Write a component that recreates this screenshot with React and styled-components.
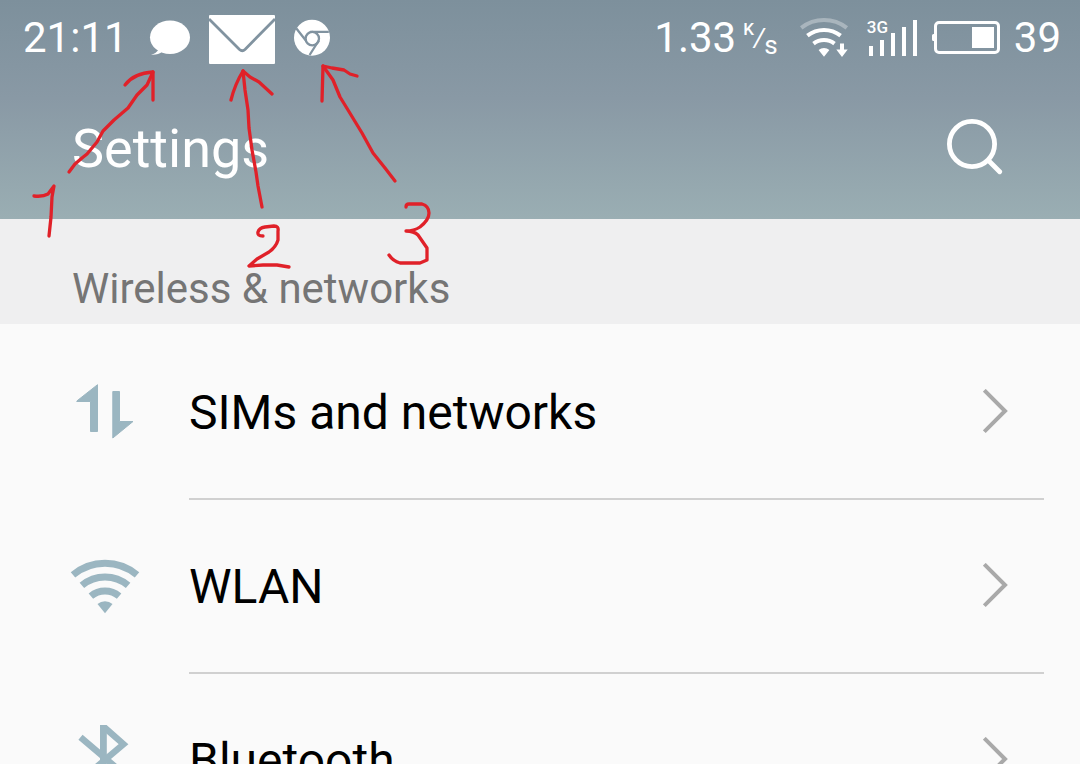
import React from "react";
import styled, { createGlobalStyle } from "styled-components";

const GlobalStyle = createGlobalStyle`
  * {
    box-sizing: border-box;
  }

  body {
    margin: 0;
    font-family: Roboto, "Noto Sans", sans-serif;
    background: #fafafa;
  }
`;

// ---------------- Layout ----------------
const Screen = styled.div`
  position: relative;
  height: 100vh;
  overflow: hidden;
  background: #fafafa;
  color: #000;
`;

const Header = styled.header`
  background: linear-gradient(#7d909c, #8999a5 45%, #9aaeb3);
  color: #fff;
`;

const StatusBar = styled.div`
  display: flex;
  justify-content: space-between;
  align-items: center;
  height: 74px;
  padding: 0 19px 0 23px;
`;

const StatusGroup = styled.div`
  display: flex;
  align-items: center;
  gap: ${({ $gap }) => $gap}px;

  svg {
    display: block;
    flex-shrink: 0;
  }
`;

const StatusText = styled.span`
  padding-top: 2px;
  font-size: 42px;
  line-height: 48px;
`;

const Speed = styled.div`
  display: flex;
  align-items: center;
  gap: 7px;
  padding-right: 8px;
`;

const Unit = styled.span`
  display: flex;
  height: 36px;
  font-size: 26px;
  line-height: 36px;
`;

const UnitTop = styled.span`
  font-size: 17px;
  font-weight: 500;
  line-height: 20px;
`;

const UnitSlash = styled.span`
  font-style: italic;
`;

const UnitBottom = styled.span`
  align-self: flex-end;
  line-height: 20px;
`;

const Signal = styled.div`
  position: relative;
`;

const NetworkType = styled.span`
  position: absolute;
  top: 0;
  left: 0;
  font-size: 17px;
  font-weight: 500;
  line-height: 18px;
`;

const TitleBar = styled.div`
  display: flex;
  justify-content: space-between;
  align-items: center;
  height: 145px;
  padding: 0 77px 0 72px;
`;

const Title = styled.h1`
  margin: 0;
  padding-top: 4px;
  font-size: 54px;
  font-weight: 400;
  line-height: 64px;
`;

const SearchButton = styled.button`
  padding: 0;
  border: none;
  background: none;
  color: inherit;
  cursor: pointer;

  svg {
    display: block;
  }
`;

const SectionTitle = styled.h2`
  margin: 0;
  padding: 46px 72px 11px;
  background: #efeff0;
  color: #757575;
  font-size: 42px;
  font-weight: 400;
  line-height: 48px;
`;

const List = styled.ul`
  margin: 0;
  padding: 0;
  list-style: none;
`;

const RowLink = styled.a`
  display: flex;
  align-items: center;
  gap: 49px;
  height: 174px;
  padding: 0 36px 0 70px;
  color: inherit;
  text-decoration: none;
`;

const RowIcon = styled.svg`
  flex-shrink: 0;
  width: 70px;
  height: 70px;
  color: #9bb6c1;
`;

const RowBody = styled.span`
  display: flex;
  flex: 1;
  justify-content: space-between;
  align-items: center;
  align-self: stretch;
  padding-right: 36px;
  border-top: 2px solid ${({ $divided }) => ($divided ? "#d0d0d0" : "transparent")};
`;

const RowLabel = styled.span`
  padding-top: 2px;
  font-size: 48px;
  line-height: 56px;
`;

const Notes = styled.svg`
  position: absolute;
  top: 0;
  left: 0;
  pointer-events: none;
`;

// ---------------- Status icons ----------------
const ChatIcon = () => (
  <svg width="43" height="36" viewBox="0 0 43 36" fill="#fff">
    <ellipse cx="23" cy="18.3" rx="20" ry="16.7" />
    <path d="M8 27 L11.3 31 Q9 34.5 4 35.7 Q11 36.2 15.5 32.5 L20 30Z" />
  </svg>
);

const MailIcon = () => (
  <svg width="66" height="54" viewBox="0 0 66 54" fill="none">
    <rect y="5" width="66" height="49" rx="1" fill="#fff" />
    <path d="M0 9 L30.5 39.5 Q33.3 42 36 39.5 L66 9" stroke="#8193a0" strokeWidth="2.8" />
  </svg>
);

const ChromeIcon = () => (
  <svg width="36" height="37" viewBox="0 0 36 37" fill="none">
    <circle cx="18" cy="18.7" r="18" fill="#fff" />
    <g stroke="#8193a0" strokeWidth="2.3">
      <circle cx="18.3" cy="19.6" r="6.7" />
      <path d="M16 12.8 H34.8 M2.2 9.2 L12.2 22 M24.8 21.5 L15.6 36" />
    </g>
  </svg>
);

const WifiStatusIcon = () => (
  <svg width="53" height="40" viewBox="0 0 53 40" fill="none" stroke="#fff" strokeWidth="4">
    <path d="M1.2 10.8 A37 37 0 0 1 46.8 10.8" strokeOpacity="0.32" />
    <path d="M7.4 18.7 A27 27 0 0 1 40.6 18.7 M13.5 26.6 A17 17 0 0 1 34.5 26.6" />
    <path
      d="M24 39.7 L18.6 33 A8.7 8.7 0 0 1 29.4 33Z M40 26.5 H44 V32.5 H47.7 L42 40 L36.3 32.5 H40Z"
      fill="#fff"
      stroke="none"
    />
  </svg>
);

const SignalBars = () => (
  <svg width="51" height="38" viewBox="0 0 51 38" fill="#fff">
    <path d="M2 28h4v10h-4z M13 22h4v16h-4z M24 15h4v23h-4z M35 9h4v29h-4z M46 2h4v36h-4z" />
  </svg>
);

const BatteryIcon = () => (
  <svg width="68" height="34" viewBox="0 0 68 34" fill="none">
    <rect x="3.5" y="2.5" width="63" height="30" rx="3.5" stroke="#fff" strokeWidth="3" />
    <path d="M2.5 14 H1.5 Q0 14 0 15.5 V19.5 Q0 21 1.5 21 H2.5Z M40 7 H62 V28 H40Z" fill="#fff" />
  </svg>
);

const SearchIcon = () => (
  <svg width="56" height="56" viewBox="0 0 56 56" fill="none" stroke="#fff" strokeWidth="4.8">
    <circle cx="25" cy="25" r="22.6" />
    <path d="M41.5 41.5 L52.7 52.7" strokeLinecap="round" />
  </svg>
);

// ---------------- Row icons ----------------
const SimIcon = () => (
  <RowIcon viewBox="0 0 70 70" fill="currentColor" stroke="currentColor" strokeLinejoin="round">
    <path d="M6.8 25 L27.5 8.7 V55.5 H20.5 V25.5 H6.8Z M42.8 15.5 H49.5 V45.5 H63 L42.8 62Z" />
  </RowIcon>
);

const WlanIcon = () => (
  <RowIcon viewBox="0 0 70 70" fill="none" stroke="currentColor" strokeWidth="7">
    <path d="M3 24.9 A49.8 49.8 0 0 1 67 24.9" />
    <path d="M11.9 35.4 A36 36 0 0 1 58.1 35.4" />
    <path d="M20.9 46.1 A22 22 0 0 1 49.1 46.1" />
    <path d="M35 63.3 L27.5 54.1 A11.6 11.6 0 0 1 42.5 54.1Z" fill="currentColor" stroke="none" />
  </RowIcon>
);

const BluetoothIcon = () => (
  <RowIcon viewBox="0 0 70 70" fill="none" stroke="currentColor" strokeWidth="6.4">
    <path d="M33.4 1 V69" strokeWidth="6.8" />
    <path d="M34.5 3.5 L53.5 20.2 L10.5 56.5" />
    <path d="M10.5 13.3 L53.5 49.8 L34.5 66.5" />
  </RowIcon>
);

const Chevron = () => (
  <svg width="25" height="46" viewBox="0 0 25 46" fill="none" stroke="#a9a9a9" strokeWidth="4">
    <path d="M1.3 1.3 L22 22 L1.3 42.7" />
  </svg>
);

// Pen marks pointing at the three notification icons
const PenNotes = () => (
  <Notes
    width="460"
    height="280"
    viewBox="0 0 460 280"
    fill="none"
    stroke="#e02129"
    strokeWidth="3.3"
    strokeLinecap="round"
    strokeLinejoin="round"
    aria-hidden="true"
  >
    <path d="M69 172 L75 164 L82 158 L87 154 L97 142 L103 131 L114 120 L128 108 L137 95 L147 85 L153 72" />
    <path d="M125 85 Q134 73 153 72 V100" />
    <path d="M34 196 Q43 197 48 194 L54 186 L52 197 L51 217 L49 236" />
    <path d="M243 71 L245 90 L248 110 L249 128 L252 150 L256 172 L258 186 L262 207" />
    <path d="M231 100 Q235 84 243 71 L250 77 L259 82 L272 94" />
    <path d="M263 236 Q257 236 258 232 Q259 228 265 227 L274 226 Q279 226 278 231 V240 Q276 247 269 252 L257 259 L249 266 L263 265 L277 265 L289 267" />
    <path d="M323 66 L333 80 L340 97 L348 110 L362 133 L373 153 L385 168 L395 181" />
    <path d="M322 101 L323 66 L332 68 L344 70 L350 74 L357 76" />
    <path d="M406 207 Q406 204 409 204 H422 Q429 206 429 213 Q429 220 420 227 Q414 231 406 231 Q414 231 418 235 L427 248 V260 L420 263 H400 Q393 261 389 255" />
  </Notes>
);

// ---------------- Component ----------------
const rows = [
  { label: "SIMs and networks", href: "#sims", Icon: SimIcon },
  { label: "WLAN", href: "#wlan", Icon: WlanIcon },
  { label: "Bluetooth", href: "#bluetooth", Icon: BluetoothIcon },
];

export default function App() {
  return (
    <>
      <GlobalStyle />
      <Screen>
        <Header>
          <StatusBar>
            <StatusGroup $gap={19}>
              <StatusText>21:11</StatusText>
              <ChatIcon />
              <MailIcon />
              <ChromeIcon />
            </StatusGroup>
            <StatusGroup $gap={14}>
              <Speed>
                <StatusText>1.33</StatusText>
                <Unit>
                  <UnitTop>K</UnitTop>
                  <UnitSlash>/</UnitSlash>
                  <UnitBottom>s</UnitBottom>
                </Unit>
              </Speed>
              <WifiStatusIcon />
              <Signal>
                <NetworkType>3G</NetworkType>
                <SignalBars />
              </Signal>
              <BatteryIcon />
              <StatusText>39</StatusText>
            </StatusGroup>
          </StatusBar>
          <TitleBar>
            <Title>Settings</Title>
            <SearchButton type="button" aria-label="Search">
              <SearchIcon />
            </SearchButton>
          </TitleBar>
        </Header>

        <main>
          <SectionTitle>Wireless &amp; networks</SectionTitle>
          <List>
            {rows.map(({ label, href, Icon }, index) => (
              <li key={label}>
                <RowLink href={href}>
                  <Icon />
                  <RowBody $divided={index > 0}>
                    <RowLabel>{label}</RowLabel>
                    <Chevron />
                  </RowBody>
                </RowLink>
              </li>
            ))}
          </List>
        </main>

        <PenNotes />
      </Screen>
    </>
  );
}
